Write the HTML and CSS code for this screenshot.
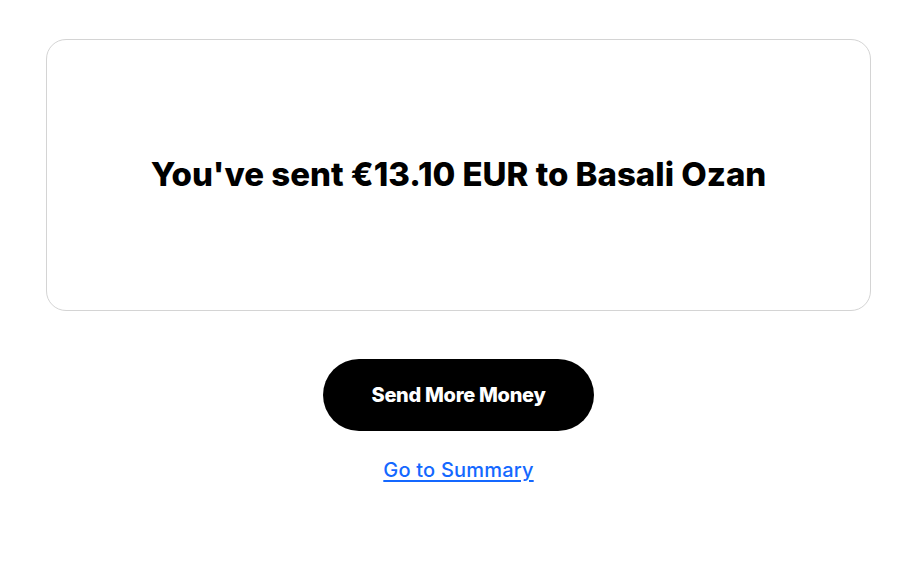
FILE: index.html
```html
<!DOCTYPE html>
<html lang="en">
<head>
<meta charset="utf-8">
<title>Transfer sent</title>
<link rel="stylesheet" href="styles.css">
</head>
<body>
<main class="page">
  <section class="card">
    <h1 class="title">You've sent €13.10 EUR to Basali Ozan</h1>
  </section>
  <div class="actions">
    <button class="btn-primary" type="button">Send More Money</button>
    <a class="link" href="#">Go to Summary</a>
  </div>
</main>
</body>
</html>
```

FILE: styles.css
```css
html, body {
  margin: 0;
  padding: 0;
  background: #ffffff;
}
body {
  font-family: Inter, "Liberation Sans", sans-serif;
  color: #000;
}
.page {
  padding: 39px 39px 0 46px;
  display: flex;
  flex-direction: column;
  align-items: stretch;
}
.card {
  height: 270px;
  border: 1px solid #d4d4d4;
  border-radius: 20px;
  display: flex;
  align-items: center;
  justify-content: center;
}
.title {
  margin: 0;
  font-size: 33px;
  font-weight: 800;
  letter-spacing: 0;
  line-height: 1.2;
  text-align: center;
}
.actions {
  margin-top: 48px;
  display: flex;
  flex-direction: column;
  align-items: center;
  gap: 27px;
}
.btn-primary {
  width: 271px;
  height: 72px;
  border: none;
  border-radius: 36px;
  background: #000;
  color: #fff;
  font-family: inherit;
  font-size: 20px;
  font-weight: 800;
  letter-spacing: -0.3px;
  cursor: pointer;
}
.link {
  color: #1468ff;
  font-size: 20px;
  font-weight: 500;
  letter-spacing: 0.2px;
  text-decoration: underline;
  text-underline-offset: 3px;
  text-decoration-thickness: 2px;
}
```
